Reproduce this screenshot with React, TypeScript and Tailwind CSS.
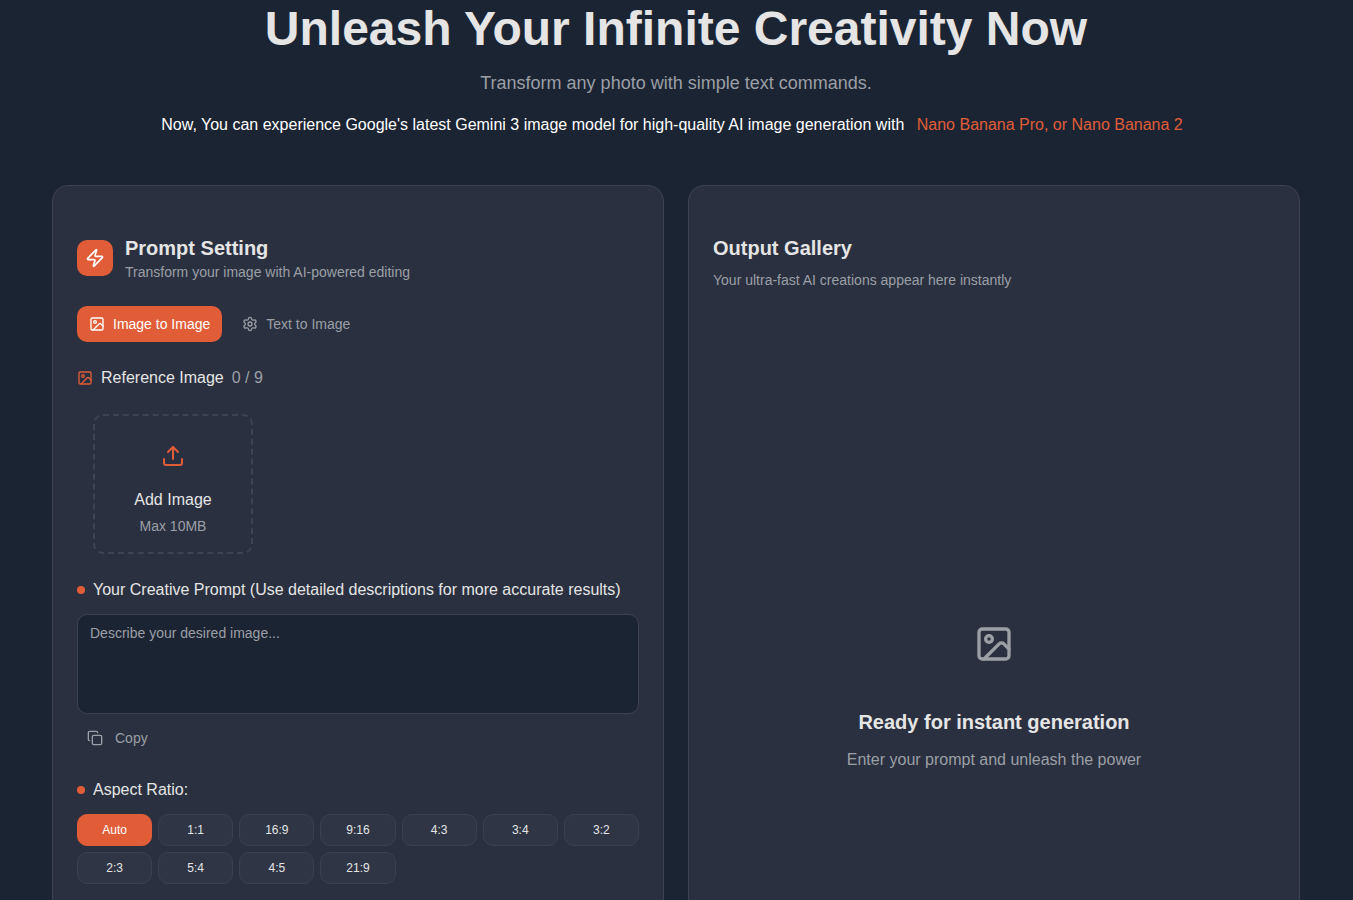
import { useState } from 'react';
import { Copy, Image as ImageIcon, Settings, Upload, Zap } from 'lucide-react';

const RATIOS = ['Auto', '1:1', '16:9', '9:16', '4:3', '3:4', '3:2', '2:3', '5:4', '4:5', '21:9'];
const MAX_IMAGES = 9;

const MODES = [
  { id: 'image', label: 'Image to Image', icon: ImageIcon },
  { id: 'text', label: 'Text to Image', icon: Settings },
] as const;

function Dot() {
  return <span className="size-2 shrink-0 rounded-full bg-[#e05d38]" />;
}

function PromptPanel() {
  const [mode, setMode] = useState<'image' | 'text'>('image');
  const [ratio, setRatio] = useState('Auto');
  const [prompt, setPrompt] = useState('');
  const [images, setImages] = useState<File[]>([]);

  return (
    <section className="rounded-2xl border border-[#3d4354] bg-[#2a3040] px-6 pt-12 pb-6">
      <div className="flex items-center gap-3">
        <div className="flex size-9 items-center justify-center rounded-[10px] bg-[#e05d38] text-white">
          <Zap className="size-5" />
        </div>
        <div>
          <h2 className="text-xl leading-7 font-bold">Prompt Setting</h2>
          <p className="text-sm text-[#9c9fa6]">Transform your image with AI-powered editing</p>
        </div>
      </div>

      <div className="mt-6 flex gap-2">
        {MODES.map(({ id, label, icon: Icon }) => (
          <button
            type="button"
            key={id}
            onClick={() => setMode(id)}
            className={`flex h-9 items-center gap-2 rounded-[10px] px-3 text-sm transition-colors ${
              mode === id ? 'bg-[#e05d38] text-white' : 'text-[#9c9fa6] hover:text-white'
            }`}
          >
            <Icon className="size-4" />
            {label}
          </button>
        ))}
      </div>

      <div className="mt-6 flex items-center gap-2">
        <ImageIcon className="size-4 text-[#e05d38]" />
        <span>Reference Image</span>
        <span className="text-[#9c9fa6]">{images.length} / {MAX_IMAGES}</span>
      </div>

      <div className="mt-2 p-4">
        <label className="flex w-40 cursor-pointer flex-col items-center rounded-[10px] border-2 border-dashed border-[#3d4354] p-4">
          <input
            type="file"
            accept="image/*"
            multiple
            className="hidden"
            onChange={(e) => setImages(Array.from(e.target.files ?? []).slice(0, MAX_IMAGES))}
          />
          <span className="mb-2 flex size-12 items-center justify-center text-[#e05d38]">
            <Upload className="size-6" />
          </span>
          <span>Add Image</span>
          <span className="mt-1 text-sm text-[#9c9fa6]">Max 10MB</span>
        </label>
      </div>

      <label htmlFor="prompt" className="mt-2 flex items-center gap-2">
        <Dot />
        Your Creative Prompt (Use detailed descriptions for more accurate results)
      </label>
      <textarea
        id="prompt"
        value={prompt}
        onChange={(e) => setPrompt(e.target.value)}
        placeholder="Describe your desired image..."
        className="mt-3 block h-25 w-full resize-none rounded-[10px] border border-[#3d4354] bg-[#1b2433] px-3 py-2 text-sm outline-none placeholder:text-[#9c9fa6] focus:border-[#e05d38]"
      />
      <button
        type="button"
        onClick={() => navigator.clipboard.writeText(prompt)}
        className="mt-2 flex h-8 items-center gap-3 px-2.5 text-sm text-[#9c9fa6] hover:text-white"
      >
        <Copy className="size-4" />
        Copy
      </button>

      <div className="mt-6 flex items-center gap-2">
        <Dot />
        Aspect Ratio:
      </div>
      <div className="mt-3 grid grid-cols-7 gap-1.5">
        {RATIOS.map((r) => (
          <button
            type="button"
            key={r}
            onClick={() => setRatio(r)}
            className={`h-8 rounded-[10px] border text-xs transition-colors ${
              ratio === r
                ? 'border-[#e05d38] bg-[#e05d38] text-white'
                : 'border-[#3a4050] bg-[#2f3545] hover:bg-[#3d4354]'
            }`}
          >
            {r}
          </button>
        ))}
      </div>
    </section>
  );
}

function OutputPanel() {
  return (
    <section className="flex flex-col rounded-2xl border border-[#3d4354] bg-[#2a3040] px-6 pt-12 pb-6">
      <h2 className="text-xl leading-7 font-bold">Output Gallery</h2>
      <p className="mt-2 text-sm text-[#9c9fa6]">Your ultra-fast AI creations appear here instantly</p>

      <div className="mt-6 flex min-h-[748px] flex-1 flex-col items-center justify-center text-center">
        <div className="mb-6 flex size-20 items-center justify-center text-[#9c9fa6]">
          <ImageIcon className="size-10" />
        </div>
        <h3 className="text-xl leading-7 font-bold">Ready for instant generation</h3>
        <p className="mt-3 text-[#9c9fa6]">Enter your prompt and unleash the power</p>
      </div>
    </section>
  );
}

export default function App() {
  return (
    <div className="min-h-screen bg-[#1b2433] pr-px font-['Liberation_Sans',Arial,sans-serif] text-[#e5e5e5]">
      <div className="mx-auto max-w-7xl px-4 pt-[5px] pb-12">
        <header className="text-center">
          <h1 className="text-5xl leading-12 font-bold">Unleash Your Infinite Creativity Now</h1>
          <p className="mt-4 text-lg leading-7 text-[#9c9fa6]">Transform any photo with simple text commands.</p>
          <p className="mt-4 text-white">
            Now, You can experience Google's latest Gemini 3 image model for high-quality AI image generation with{' '}
            <a href="#models" className="px-2 text-[#e05d38]">Nano Banana Pro, or Nano Banana 2</a>
          </p>
        </header>

        <main className="mt-12 grid gap-6 md:grid-cols-2">
          <PromptPanel />
          <OutputPanel />
        </main>
      </div>
    </div>
  );
}
